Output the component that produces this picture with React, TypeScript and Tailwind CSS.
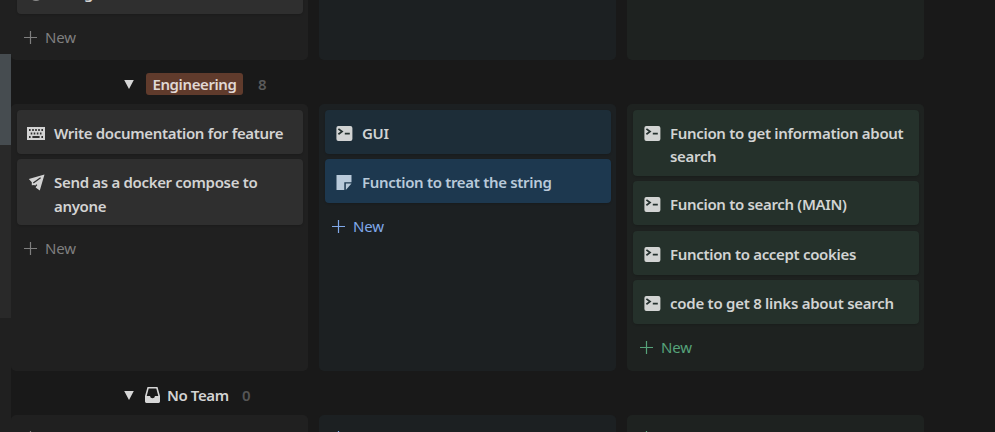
import type { ReactNode } from "react";

type Tone = "gray" | "blue" | "green";
type IconName = "terminal" | "keyboard" | "plane" | "note" | "palette";

const columnTone: Record<Tone, string> = {
  gray: "bg-[#202020]",
  blue: "bg-[#1c2022]",
  green: "bg-[#1e2220]",
};

const newTone: Record<Tone, string> = {
  gray: "text-[#7f7f7f]",
  blue: "text-[#80a9ea]",
  green: "text-[#56a27a]",
};

function Icon({ name }: { name: IconName }) {
  if (name === "keyboard")
    return (
      <svg width="18" height="13" viewBox="0 0 18 13" className="-ml-px mt-px block" fill="currentColor" fillRule="evenodd">
        <path d="M0 0h18v13H0zM2 2v2h1.6V2zM5.2 2v2h1.6V2zM8.2 2v2h1.6V2zM11.2 2v2h1.6V2zM14.4 2v2H16V2zM3.7 5.5v2h1.6v-2zM6.7 5.5v2h1.6v-2zM9.8 5.5v2h1.6v-2zM12.9 5.5v2h1.6v-2zM2 9v2h1.6V9zM5.4 9v2h7.2V9zM14.4 9v2H16V9z" />
      </svg>
    );
  if (name === "plane")
    return (
      <svg width="17" height="17" viewBox="0 0 17 17" className="-mt-px block">
        <path d="M16.5.5.8 4.9l3 3.4v3l2.8-.3 1 2.4 4.2 3.1z" fill="currentColor" />
        <path d="M12.6 3.8 5.3 9M6.6 13.5 8.8 10.6" fill="none" stroke="#2f2f2f" strokeWidth="1.3" />
      </svg>
    );
  if (name === "note")
    return (
      <svg width="16" height="16" viewBox="0 0 16 16" className="block" fill="currentColor">
        <path d="M.5 0h15v7.2H8.3V15H.5z" />
        <path d="M9.8 8.6h5.7L9.8 15z" />
      </svg>
    );
  if (name === "palette")
    return (
      <svg width="16" height="16" viewBox="0 0 16 16" className="block" fill="#8b8b8b">
        <circle cx="8" cy="8" r="7" />
      </svg>
    );
  return (
    <svg width="17" height="15" viewBox="0 0 17 15" className="block">
      <rect x=".4" y="0" width="16" height="15" rx="2" fill="currentColor" />
      <path d="M2.4 2.9 6 5.6 2.4 8.3M8.8 7.6h5" fill="none" stroke="#25312f" strokeWidth="1.8" />
    </svg>
  );
}

function Card({ icon, color, height, children }: { icon: IconName; color: string; height: string; children: ReactNode }) {
  return (
    <div className={`flex shrink-0 gap-2.5 rounded-[4px] pl-[11px] pt-3 shadow-[0_1px_2px_rgba(0,0,0,0.15)] ${height} ${color}`}>
      <div className="mt-1 w-4 shrink-0">
        <Icon name={icon} />
      </div>
      <div className="whitespace-nowrap text-[15px] font-semibold leading-[23.3px] tracking-[-0.32px]">{children}</div>
    </div>
  );
}

function NewButton({ tone }: { tone: Tone }) {
  return (
    <div className={`flex h-11 shrink-0 items-center gap-2 pl-[7px] ${newTone[tone]}`}>
      <svg width="13" height="13" viewBox="0 0 13 13" className="mt-[3px]">
        <path d="M6.5 0v13M0 6.5h13" stroke="currentColor" strokeWidth="1.2" />
      </svg>
      <span className="mt-0.5 text-[15px] leading-5 tracking-[-0.1px]">New</span>
    </div>
  );
}

function Column({ tone, children }: { tone: Tone; children?: ReactNode }) {
  return (
    <div className={`flex w-[297px] shrink-0 flex-col rounded-[5px] pl-1.5 pr-[5px] ${columnTone[tone]}`}>
      {children}
    </div>
  );
}

function Cards({ children }: { children: ReactNode }) {
  return <div className="flex flex-col gap-[5.33px] pt-1.5">{children}</div>;
}

function Caret() {
  return (
    <svg width="10" height="9" viewBox="0 0 10 9" fill="#d6d6d6">
      <path d="M.2 0h9.6L5 9z" />
    </svg>
  );
}

const gray = "bg-[#2f2f2f] text-[#d3d3d3]";
const teal = "bg-[#1d2d38] text-[#d1d3d3]";
const blue = "bg-[#1d384f] text-[#b9cada]";
const green = "bg-[#25312b] text-[#d2d4d3]";

export default function App() {
  return (
    <div className="flex h-[432px] w-[995px] overflow-hidden bg-[#191919] font-['Noto_Sans',sans-serif]">
      <div className="flex w-[11px] shrink-0 flex-col bg-[#202020]">
        <div className="mt-[54px] h-[91px] bg-[#464c50]" />
        <div className="h-[173px] bg-[#292929]" />
      </div>
      <main className="w-[984px]">
        <section className="flex h-[60px] items-end gap-[11px] overflow-hidden">
          <div className="flex h-[86px] gap-[11px]">
            <Column tone="gray">
              <div className="-mt-1 h-11">
                <Card icon="palette" color={gray} height="h-11">Design</Card>
              </div>
              <NewButton tone="gray" />
            </Column>
            <Column tone="blue" />
            <Column tone="green" />
          </div>
        </section>
        <header className="flex h-11 items-center pl-[113px] pt-1">
          <Caret />
          <span className="ml-3 flex h-[22px] w-[97px] items-center justify-center rounded-[3px] bg-[#603b2c] text-[15px] font-semibold tracking-[-0.4px] text-[#e0d8d4]">Engineering</span>
          <span className="ml-[15px] text-[15px] font-semibold text-[#5a5a5a]">8</span>
        </header>
        <section className="flex h-[267px] gap-[11px]">
          <Column tone="gray">
            <Cards>
              <Card icon="keyboard" color={gray} height="h-11">Write documentation for feature</Card>
              <Card icon="plane" color={gray} height="h-[66px]">Send as a docker compose to<br />anyone</Card>
            </Cards>
            <NewButton tone="gray" />
          </Column>
          <Column tone="blue">
            <Cards>
              <Card icon="terminal" color={teal} height="h-11">GUI</Card>
              <Card icon="note" color={blue} height="h-11">Function to treat the string</Card>
            </Cards>
            <NewButton tone="blue" />
          </Column>
          <Column tone="green">
            <Cards>
              <Card icon="terminal" color={green} height="h-[66px]">Funcion to get information about<br />search</Card>
              <Card icon="terminal" color={green} height="h-11">Funcion to search (MAIN)</Card>
              <Card icon="terminal" color={green} height="h-11">Function to accept cookies</Card>
              <Card icon="terminal" color={green} height="h-11"><span className="tracking-[-0.26px]">code to get 8 links about search</span></Card>
            </Cards>
            <NewButton tone="green" />
          </Column>
        </section>
        <header className="flex h-11 items-center pl-[113px] pt-1">
          <Caret />
          <svg width="15" height="16" viewBox="0 0 15 16" className="ml-[11px]" fill="#d6d6d6" fillRule="evenodd">
            <path d="M2.5 0h10L15 9v5.6q0 1.4-1.4 1.4H1.4Q0 16 0 14.6V9zM3.7 1.5 1.7 9H5q.3 2.2 2.5 2.2T10 9h3.3l-2-7.5z" />
          </svg>
          <span className="ml-[7px] w-[62px] whitespace-nowrap text-[15px] font-semibold tracking-[-0.4px] text-[#d3d3d3]">No Team</span>
          <span className="ml-[13px] text-[15px] font-semibold text-[#555555]">0</span>
        </header>
        <section className="flex h-[80px] gap-[11px]">
          <Column tone="gray"><div className="-mt-px"><NewButton tone="gray" /></div></Column>
          <Column tone="blue"><div className="-mt-px"><NewButton tone="blue" /></div></Column>
          <Column tone="green"><div className="-mt-px"><NewButton tone="green" /></div></Column>
        </section>
      </main>
    </div>
  );
}
